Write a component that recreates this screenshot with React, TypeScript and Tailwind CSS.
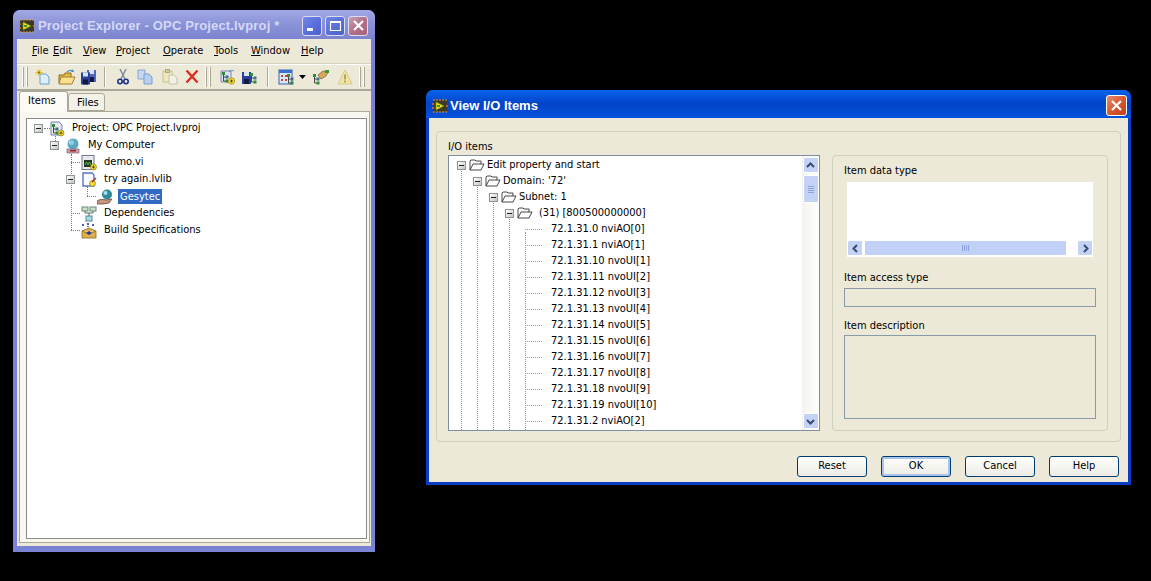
import type { ReactNode } from 'react'

const ui = "font-['DejaVu_Sans_Condensed','Liberation_Sans',sans-serif] text-[11px] text-black"

// ---- icons ----
const Svg = ({ w = 16, h = 16, children }: { w?: number; h?: number; children: ReactNode }) => (
  <svg width={w} height={h} viewBox={`0 0 ${w} ${h}`} className="shrink-0 block">
    {children}
  </svg>
)

const LvLogo = () => (
  <Svg>
    <rect x="1" y="2" width="14" height="12" fill="#3b3a2a" />
    <path d="M1 2h14M1 14h14" stroke="#e0a030" strokeWidth="1" strokeDasharray="2 1" />
    <path d="M4 4l8 4-8 4z" fill="#f2e020" stroke="#6d8a10" strokeWidth="0.7" />
    <rect x="5" y="7" width="3" height="2" fill="#3f9a20" />
    <path d="M0 6h2M0 10h2M14 8h2" stroke="#d8782a" strokeWidth="1.4" />
  </Svg>
)

const NewIcon = () => (
  <Svg>
    <path d="M5 5h6l3 3v7H5z" fill="#dcefff" stroke="#6aa0d0" />
    <path d="M4 0v7M0.5 3.5h7M1.5 1l5 5M6.500 1l-5 5" stroke="#e8c010" strokeWidth="1" />
    <path d="M3.500 2.500h1v2h-1z" fill="#222" />
  </Svg>
)

const OpenIcon = () => (
  <Svg w={18}>
    <path d="M1 6h5l1-2h6v10H1z" fill="#e8b840" stroke="#8a6a20" />
    <path d="M3 8h14l-3 7H1z" fill="#f8e090" stroke="#a08030" />
    <path d="M9 3c2-2 4-2 6-1" stroke="#4a90c0" fill="none" strokeWidth="1.3" />
    <path d="M15 0l1 3-3 0z" fill="#4a90c0" />
  </Svg>
)

const Floppy = ({ x = 0, c = '#2a3f9a' }: { x?: number; c?: string }) => (
  <g transform={`translate(${x} 0)`}>
    <path d="M0 3h9v12H0z" fill={c} />
    <rect x="2" y="3" width="5" height="4" fill="#d8e4f8" />
    <rect x="2" y="10" width="5" height="5" fill="#10183f" />
  </g>
)

const SaveAllIcon = () => (
  <Svg>
    <g transform="translate(6 -2)"><Floppy c="#5068c0" /></g>
    <g transform="translate(0 0.500)"><Floppy /></g>
  </Svg>
)

const CutIcon = () => (
  <Svg w={12}>
    <path d="M3 0l5 10M9 0L4 10" stroke="#7a8aa0" strokeWidth="1.4" />
    <circle cx="3" cy="12.500" r="2.200" fill="none" stroke="#1f2f8a" strokeWidth="1.600" />
    <circle cx="9" cy="12.500" r="2.200" fill="none" stroke="#1f2f8a" strokeWidth="1.600" />
  </Svg>
)

const CopyIcon = () => (
  <Svg>
    <path d="M1 1h7l0 9H1z" fill="#c8d8f4" stroke="#8aa4d4" />
    <path d="M7 5h5l3 3v7H7z" fill="#b8d0f0" stroke="#7a9ccc" />
  </Svg>
)

const PasteIcon = () => (
  <Svg>
    <path d="M1 2h9v11H1z" fill="#eee8c0" stroke="#c8c090" />
    <rect x="3.500" y="0.500" width="4" height="3" fill="#d0cca0" stroke="#b0a880" />
    <path d="M7 6h5l3 3v6H7z" fill="#f0f0e4" stroke="#c4c4a8" />
  </Svg>
)

const DeleteIcon = () => (
  <Svg w={14}>
    <path d="M1.500 1.500l11 12M12.500 1.500l-11 12" stroke="#e02c20" strokeWidth="2.400" />
  </Svg>
)

const HierarchyMini = ({ x = 0, y = 0 }: { x?: number; y?: number }) => (
  <g transform={`translate(${x} ${y})`}>
    <rect x="0" y="0" width="3" height="3" fill="#2f8a3a" />
    <rect x="3.500" y="3.500" width="3" height="3" fill="#40708a" />
    <rect x="3.500" y="7.500" width="3" height="3" fill="#2f8a3a" />
    <path d="M1.500 3v6h2M1.500 5h2" stroke="#222" strokeWidth="0.8" fill="none" />
  </g>
)

const ProjectIcon = () => (
  <Svg>
    <path d="M2 1h8l3 3v10H2z" fill="#e8e8f0" stroke="#7080a8" />
    <HierarchyMini x={3} y={3} />
    <circle cx="12" cy="12" r="3" fill="#f0dc30" stroke="#8a7a10" strokeWidth="0.7" />
    <path d="M10.500 12h3M12 10.500v3" stroke="#333" strokeWidth="0.8" />
  </Svg>
)

const ProjectAddIcon = () => (
  <Svg>
    <path d="M1 2h10v11H1z" fill="#dfe4f4" stroke="#7a86aa" />
    <HierarchyMini x={2} y={3} />
    <circle cx="11.500" cy="12" r="3.200" fill="#f0dc30" stroke="#a08a10" strokeWidth="0.7" />
    <path d="M10 12h3M11.500 10.500v3" stroke="#333" strokeWidth="0.8" />
    <path d="M9 3c2-2 3-2 5-1" stroke="#4a90c0" fill="none" />
  </Svg>
)

const SaveTreeIcon = () => (
  <Svg>
    <Floppy c="#2a3f9a" />
    <HierarchyMini x={8} y={4} />
  </Svg>
)

const GridIcon = () => (
  <Svg>
    <rect x="1" y="1" width="13" height="14" fill="#dce8fa" stroke="#3a60b8" />
    <rect x="1" y="1" width="13" height="3" fill="#3a70d0" />
    <path d="M3 6h2v2H3zM7 6h2v2H7zM3 10h2v2H3zM7 10h2v2H7z" fill="#c04a30" />
    <HierarchyMini x={9} y={5} />
  </Svg>
)

const HandIcon = () => (
  <Svg w={18}>
    <HierarchyMini x={1} y={5} />
    <path d="M6 6l5-4 5 1-2 4-5 3z" fill="#d8a860" stroke="#8a6a30" strokeWidth="0.8" />
    <rect x="13" y="1" width="4" height="3" fill="#3a9a30" />
  </Svg>
)

const WarnIcon = () => (
  <Svg>
    <path d="M8 1l7 14H1z" fill="#f0e6a0" stroke="#d8cc88" />
    <path d="M8 5.500v5M8 11.500v2" stroke="#9a9060" strokeWidth="1.500" />
  </Svg>
)

const ComputerIcon = () => (
  <Svg>
    <circle cx="8" cy="6" r="5.500" fill="#58a8c8" />
    <circle cx="6.500" cy="4.500" r="2.500" fill="#b8e4f0" />
    <rect x="5" y="1" width="7" height="9" fill="#5aa8c4" opacity="0.4" />
    <path d="M2 11h12v4H2z" fill="#c8a0a8" stroke="#80606a" strokeWidth="0.7" />
    <rect x="5" y="12" width="6" height="1.500" fill="#a02030" />
  </Svg>
)

const ViIcon = () => (
  <Svg>
    <rect x="1" y="0.500" width="12" height="14" fill="#e8e8ee" stroke="#70788a" />
    <rect x="3" y="5" width="8" height="7" fill="#243820" />
    <path d="M4 10l1.500-3 1.500 3 1.500-3 1.500 3" stroke="#70d060" fill="none" strokeWidth="0.8" />
    <circle cx="12.500" cy="12" r="3" fill="#f0dc30" stroke="#8a7a10" strokeWidth="0.7" />
    <path d="M11 12h3M12.500 10.500v3" stroke="#333" strokeWidth="0.8" />
  </Svg>
)

const LibIcon = () => (
  <Svg>
    <path d="M2 1h9l2 2v11H2z" fill="#fafaff" stroke="#5a78c0" strokeWidth="1.400" />
    <circle cx="11.500" cy="11.500" r="3" fill="#f0dc30" stroke="#8a7a10" strokeWidth="0.7" />
    <path d="M11 10l4-4" stroke="#b03020" strokeWidth="1.400" />
  </Svg>
)

const ServerIcon = () => (
  <Svg>
    <circle cx="10" cy="5.500" r="5" fill="#2f8a9a" />
    <circle cx="8.500" cy="4" r="2" fill="#a8e0e8" />
    <path d="M0 12c3-2 6-2 9-1l6-1-3 4-6 1H0z" fill="#c89880" stroke="#5a3a2a" strokeWidth="0.7" />
  </Svg>
)

const DepsIcon = () => (
  <Svg>
    <rect x="1" y="1" width="6" height="4" fill="#c8e0c8" stroke="#6a8a7a" />
    <rect x="9" y="1" width="6" height="4" fill="#c8e0c8" stroke="#6a8a7a" />
    <rect x="5" y="10" width="6" height="5" fill="#a0dce4" stroke="#5a8a9a" />
    <path d="M4 5v2h8V5M8 7v3" stroke="#5a6a6a" fill="none" />
  </Svg>
)

const BuildIcon = () => (
  <Svg>
    <path d="M1 8l7-3 7 3v7H1z" fill="#e0b050" stroke="#8a6a20" strokeWidth="0.8" />
    <path d="M1 8l7 3 7-3" fill="#f0cc78" stroke="#8a6a20" strokeWidth="0.8" />
    <path d="M5 10l3 2 3-2-3-2z" fill="#2a3a9a" />
    <path d="M1 2h2M6 1h2M11 2h2M7 3v1" stroke="#1a2a9a" strokeWidth="1.400" />
  </Svg>
)

const FolderOpen = () => (
  <Svg>
    <path d="M1 13V4l1-1h4l1 1h5v3" fill="#fff" stroke="#333" strokeWidth="0.9" />
    <path d="M1 13l3-6h11l-3 6z" fill="#fff" stroke="#333" strokeWidth="0.9" />
  </Svg>
)

// ---- small widgets ----
const Expander = () => (
  <span className="relative z-10 flex w-[9px] h-[9px] shrink-0 items-center justify-center border border-[#8c9494] bg-linear-to-br from-white to-[#c4c4ba]">
    <span className="w-[5px] h-px bg-[#222]" />
  </span>
)

const Grip = () => (
  <span className="flex gap-[2px] h-[20px] mx-[2px]">
    <span className="w-[2px] border-l border-r border-l-white border-r-[#a8a898]" />
    <span className="w-[2px] border-l border-r border-l-white border-r-[#a8a898]" />
  </span>
)

const ToolSep = () => <span className="block w-[2px] h-[20px] border-l border-r border-l-[#aca899] border-r-white" />

const WinBtn = ({ kind, active }: { kind: 'min' | 'max' | 'close'; active?: boolean }) => {
  if (kind === 'close') {
    return (
      <span
        className={
          active
            ? 'w-[21px] h-[21px] rounded-[3px] border border-white bg-linear-to-br from-[#e88a70] via-[#d85a30] to-[#c04018] flex items-center justify-center'
            : 'w-[20px] h-[20px] rounded-[3px] border border-[#dcdcf0] bg-linear-to-br from-[#c4a0b4] via-[#b47088] to-[#a86078] flex items-center justify-center'
        }
      >
        <svg width="13" height="13" viewBox="0 0 13 13">
          <path d="M2 2l9 9M11 2l-9 9" stroke="#fff" strokeWidth="2.200" />
        </svg>
      </span>
    )
  }
  return (
    <span className="w-[20px] h-[20px] rounded-[3px] border border-[#dcdcf0] bg-linear-to-br from-[#7488e4] via-[#5a70dc] to-[#4c60cc] flex items-center justify-center">
      <svg width="13" height="13" viewBox="0 0 13 13">
        {kind === 'min' ? (
          <rect x="1" y="9" width="6" height="3" fill="#fff" />
        ) : (
          <path d="M1.500 2.500h10v9h-10zM1.500 3.500h10" stroke="#fff" fill="none" strokeWidth="1.200" />
        )}
      </svg>
    </span>
  )
}

const Arrow = ({ dir }: { dir: 'up' | 'down' | 'left' | 'right' }) => {
  const d = {
    up: 'M2 7l3.500-3.500L9 7',
    down: 'M2 4l3.500 3.500L9 4',
    left: 'M7 2L3.500 5.500 7 9',
    right: 'M4 2l3.500 3.500L4 9',
  }[dir]
  return (
    <svg width="11" height="11" viewBox="0 0 11 11">
      <path d={d} stroke="#3a4a70" strokeWidth="2" fill="none" />
    </svg>
  )
}

const ScrollBtn = ({ dir }: { dir: 'up' | 'down' | 'left' | 'right' }) => (
  <span className="w-[16px] h-[16px] shrink-0 rounded-[2px] border border-white bg-[#c4d2f6] flex items-center justify-center">
    <Arrow dir={dir} />
  </span>
)

const PushButton = ({ label, primary }: { label: string; primary?: boolean }) => (
  <span
    className={
      primary
        ? 'w-[70px] h-[21px] rounded-[3px] border border-[#003c74] bg-linear-to-b from-white to-[#ecebe5] shadow-[inset_0_0_0_2px_#a8c4ec] flex items-center justify-center'
        : 'w-[70px] h-[21px] rounded-[3px] border border-[#003c74] bg-linear-to-b from-white to-[#ecebe5] flex items-center justify-center'
    }
  >
    {label}
  </span>
)

const Menu = ({ label, className }: { label: string; className: string }) => (
  <span className={className}>
    <span className="underline">{label[0]}</span>
    {label.slice(1)}
  </span>
)

const ProjectExplorer = () => {
  const rows = [
    { level: 0, text: 'Project: OPC Project.lvproj', icon: <ProjectIcon />, open: true },
    { level: 1, text: 'My Computer', icon: <ComputerIcon />, open: true },
    { level: 2, text: 'demo.vi', icon: <ViIcon /> },
    { level: 2, text: 'try again.lvlib', icon: <LibIcon />, open: true },
    { level: 3, text: 'Gesytec', icon: <ServerIcon />, selected: true },
    { level: 2, text: 'Dependencies', icon: <DepsIcon /> },
    { level: 2, text: 'Build Specifications', icon: <BuildIcon /> },
  ]
  const lines = [
    { left: 17, top: 9, width: 12, height: 0 },
    { left: 28, top: 9, width: 0, height: 13 },
    { left: 44, top: 35, width: 0, height: 76 },
    { left: 44, top: 43, width: 9, height: 0 },
    { left: 44, top: 94, width: 9, height: 0 },
    { left: 44, top: 111, width: 9, height: 0 },
    { left: 60, top: 67, width: 0, height: 10 },
    { left: 60, top: 77, width: 9, height: 0 },
  ]

  return (
    <div className="absolute left-[13px] top-[10px] w-[362px] h-[542px] rounded-t-[7px] bg-[#7a82d4] flex flex-col px-[4px] pb-[6px]">
      <div className="h-[29px] -mx-[4px] pl-[6px] pr-[7px] pt-[2px] rounded-t-[7px] bg-linear-to-b from-[#a0a8e4] via-[#8a92d8] to-[#7c84d0] flex items-center">
        <LvLogo />
        <span className="ml-[3px] font-['Liberation_Sans',sans-serif] font-bold text-[13px] tracking-[0.15px] text-[#d4d8f6] whitespace-nowrap">
          Project Explorer - OPC Project.lvproj *
        </span>
        <span className="ml-auto flex gap-[3px]">
          <WinBtn kind="min" />
          <WinBtn kind="max" />
          <WinBtn kind="close" />
        </span>
      </div>
      <div className={`flex-1 min-h-0 bg-[#ece9d8] flex flex-col ${ui}`}>
        <div className="h-[25px] relative flex items-center border-b border-[#d8d4c0]">
          <Menu label="File" className="ml-[15px] w-[21px]" />
          <Menu label="Edit" className="w-[30px]" />
          <Menu label="View" className="w-[33px]" />
          <Menu label="Project" className="w-[47px]" />
          <Menu label="Operate" className="w-[51px]" />
          <Menu label="Tools" className="w-[37px]" />
          <Menu label="Window" className="w-[50px]" />
          <Menu label="Help" className="" />
        </div>
        <div className="h-[27px] flex items-center pl-[3px] border-b-2 border-b-[#aca899] border-t border-t-white">
          <Grip />
          <span className="ml-[5px]"><NewIcon /></span>
          <span className="ml-[7px]"><OpenIcon /></span>
          <span className="ml-[5px]"><SaveAllIcon /></span>
          <span className="ml-[7px]"><ToolSep /></span>
          <span className="ml-[11px]"><CutIcon /></span>
          <span className="ml-[8px]"><CopyIcon /></span>
          <span className="ml-[9px]"><PasteIcon /></span>
          <span className="ml-[7px]"><DeleteIcon /></span>
          <span className="ml-[4px]"><Grip /></span>
          <span className="ml-[7px]"><ProjectAddIcon /></span>
          <span className="ml-[6px]"><SaveTreeIcon /></span>
          <span className="ml-[9px]"><ToolSep /></span>
          <span className="ml-[9px]"><GridIcon /></span>
          <svg width="7" height="4" viewBox="0 0 7 4" className="ml-[5px]">
            <path d="M0 0h7L3.500 4z" fill="#000" />
          </svg>
          <span className="ml-[6px]"><HandIcon /></span>
          <span className="ml-[7px]"><WarnIcon /></span>
          <span className="ml-[4px]"><Grip /></span>
        </div>
        <div className="relative h-[20px] flex items-end pl-[2px]">
          <span className="relative z-10 w-[49px] h-[21px] -mb-px pl-[8px] pt-[1px] bg-[#fbfaf4] border border-[#aca899] border-b-0 rounded-t-[3px]">
            Items
          </span>
          <span className="w-[37px] h-[18px] pl-[8px] pt-[1px] bg-[#f4f2e8] border border-[#aca899] rounded-t-[3px]">
            Files
          </span>
        </div>
        <div className="ml-[2px] mr-px flex-1 min-h-0 border border-[#aca899] bg-[#f8f7f0] pl-[6px] pr-[2px] pt-[6px] pb-[3px]">
          <div className="relative h-full border border-[#8a8a8a] bg-white overflow-hidden">
            {lines.map((l, i) => (
              <span
                key={i}
                className="absolute border-l border-t border-dotted border-[#777]"
                style={{ left: l.left, top: l.top, width: l.width, height: l.height }}
              />
            ))}
            <div className="relative pt-px">
              {rows.map((r) => (
                <div key={r.text} className="flex items-center h-[17px]" style={{ paddingLeft: 7 + r.level * 16 }}>
                  <span className="w-[9px] shrink-0">{r.open && <Expander />}</span>
                  <span className="ml-[6px] w-[16px] flex justify-center relative z-10">{r.icon}</span>
                  <span
                    className={
                      r.selected
                        ? 'ml-[5px] px-[2px] h-[15px] leading-[15px] bg-[#316ac5] text-white whitespace-nowrap'
                        : 'ml-[7px] whitespace-nowrap'
                    }
                  >
                    {r.text}
                  </span>
                </div>
              ))}
            </div>
          </div>
        </div>
        <div className="h-[3px]" />
      </div>
    </div>
  )
}

const ViewIoItems = () => {
  const folders = ['Edit property and start', "Domain: '72'", 'Subnet: 1', '(31) [800500000000]']
  const leaves = [
    '72.1.31.0 nviAO[0]',
    '72.1.31.1 nviAO[1]',
    '72.1.31.10 nvoUI[1]',
    '72.1.31.11 nvoUI[2]',
    '72.1.31.12 nvoUI[3]',
    '72.1.31.13 nvoUI[4]',
    '72.1.31.14 nvoUI[5]',
    '72.1.31.15 nvoUI[6]',
    '72.1.31.16 nvoUI[7]',
    '72.1.31.17 nvoUI[8]',
    '72.1.31.18 nvoUI[9]',
    '72.1.31.19 nvoUI[10]',
    '72.1.31.2 nviAO[2]',
  ]

  return (
    <div className="absolute left-[426px] top-[90px] w-[705px] h-[395px] rounded-t-[7px] bg-[#0a3cc4] flex flex-col px-[3px] pb-[3px]">
      <div className="h-[28px] -mx-[3px] pl-[6px] pr-[4px] pt-[3px] rounded-t-[7px] bg-linear-to-b from-[#0a62ea] via-[#0343c9] to-[#0552dc] flex items-center">
        <LvLogo />
        <span className="ml-[2px] font-['Liberation_Sans',sans-serif] font-bold text-[13px] text-white whitespace-nowrap">
          View I/O Items
        </span>
        <span className="ml-auto">
          <WinBtn kind="close" active />
        </span>
      </div>
      <div className={`flex-1 min-h-0 bg-[#ece9d8] flex flex-col px-[7px] pt-[13px] ${ui}`}>
        <div className="h-[311px] rounded-[4px] border border-[#d0d0bf] flex pl-[11px] pr-[11px]">
          <div className="w-[372px]">
            <div className="h-[23px] pt-[7px] leading-[16px]">I/O items</div>
            <div className="relative h-[276px] border border-[#7f8f9f] bg-white flex overflow-hidden">
              <div className="relative flex-1 min-w-0 overflow-hidden pt-px">
                {[12, 28, 44, 60, 76].map((left, i) => (
                  <span
                    key={left}
                    className="absolute bottom-0 border-l border-dotted border-[#999]"
                    style={{ left, top: 12 + i * 16 }}
                  />
                ))}
                {folders.map((f, i) => (
                  <div key={f} className="flex items-center h-[16px]" style={{ paddingLeft: 8 + i * 16 }}>
                    <Expander />
                    <span className="ml-[3px] relative z-10"><FolderOpen /></span>
                    <span className={i === 3 ? 'ml-[6px] whitespace-nowrap' : 'ml-[2px] whitespace-nowrap'}>{f}</span>
                  </div>
                ))}
                {leaves.map((l) => (
                  <div key={l} className="flex items-center h-[16px] pl-[76px]">
                    <span className="w-[17px] border-t border-dotted border-[#999]" />
                    <span className="ml-[9px] whitespace-nowrap">{l}</span>
                  </div>
                ))}
              </div>
              <div className="w-[17px] shrink-0 py-px bg-linear-to-r from-[#f2f2ee] to-white flex flex-col items-center">
                <ScrollBtn dir="up" />
                <span className="mt-[2px] w-[16px] h-[28px] rounded-[2px] border border-white bg-[#c4d2f6] flex flex-col items-center justify-center gap-px">
                  <span className="w-[6px] h-px bg-[#8ea4dc]" />
                  <span className="w-[6px] h-px bg-[#8ea4dc]" />
                  <span className="w-[6px] h-px bg-[#8ea4dc]" />
                  <span className="w-[6px] h-px bg-[#8ea4dc]" />
                </span>
                <span className="flex-1" />
                <ScrollBtn dir="down" />
              </div>
            </div>
          </div>
          <div className="ml-[12px] mt-[23px] w-[276px] h-[276px] rounded-[4px] border border-[#d0d0bf] pl-[11px] pt-[7px]">
            <div className="h-[19px] leading-[16px]">Item data type</div>
            <div className="ml-[3px] w-[246px] h-[75px] bg-white flex flex-col justify-end pb-px">
              <div className="h-[16px] flex items-center">
                <ScrollBtn dir="left" />
                <span className="ml-px w-[203px] h-[16px] rounded-[2px] border border-white bg-[#c0d0f6] flex items-center justify-center gap-px">
                  <span className="w-px h-[6px] bg-[#8ea4dc]" />
                  <span className="w-px h-[6px] bg-[#8ea4dc]" />
                  <span className="w-px h-[6px] bg-[#8ea4dc]" />
                  <span className="w-px h-[6px] bg-[#8ea4dc]" />
                </span>
                <span className="flex-1" />
                <ScrollBtn dir="right" />
              </div>
            </div>
            <div className="mt-[13px] h-[18px] leading-[16px]">Item access type</div>
            <div className="w-[252px] h-[19px] border border-[#8a9aa8]" />
            <div className="mt-[11px] h-[17px] leading-[16px]">Item description</div>
            <div className="w-[252px] h-[84px] border border-[#8a9aa8]" />
          </div>
        </div>
        <div className="mt-[14px] flex justify-end gap-[14px] pr-[2px]">
          <PushButton label="Reset" />
          <PushButton label="OK" primary />
          <PushButton label="Cancel" />
          <PushButton label="Help" />
        </div>
      </div>
    </div>
  )
}

export default function App() {
  return (
    <div className="relative w-[1151px] h-[581px] bg-black overflow-hidden">
      <ProjectExplorer />
      <ViewIoItems />
    </div>
  )
}
